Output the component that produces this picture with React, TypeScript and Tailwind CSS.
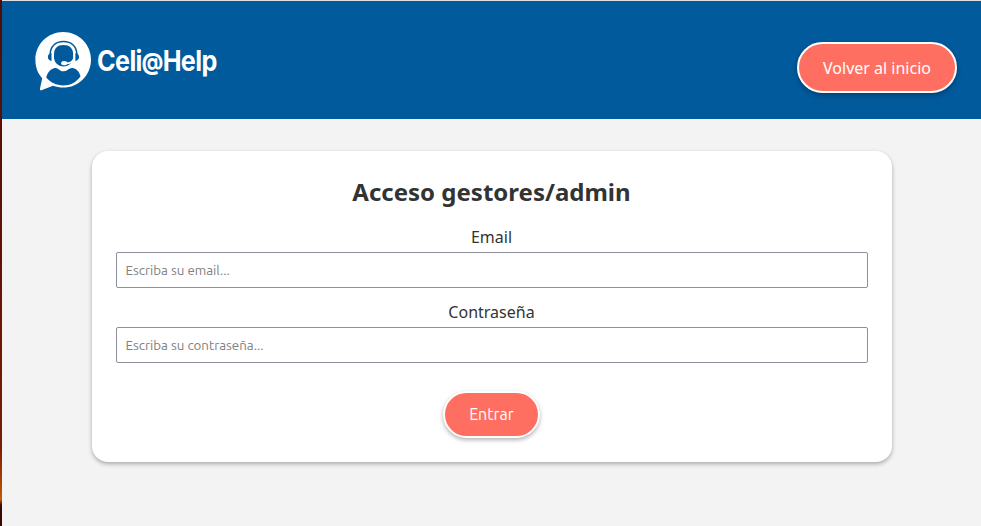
import React from "react";

function Logo() {
  return (
    <a className="mt-0.5 flex items-center" aria-label="Celi@Help">
      <svg className="h-[60px] w-[58px]" viewBox="0 0 58 60" fill="none">
        <path
          d="M28.2 1C43.5 1 56 13.2 56 28.7C56 44.2 43.5 56.6 28.2 56.6C24.6 56.6 21.2 56 18 54.8L6.4 59.2C5.4 59.6 4.8 59 4.9 58L7.2 47.2C2.7 42.3 0.4 36 0.4 28.7C0.4 13.2 12.9 1 28.2 1Z"
          fill="#fff"
        />
        <path
          d="M11.2 46.6C12.6 41.6 15.3 38 19.8 37.1C22 36.8 23.2 38.2 25.2 39.4C27.3 40.6 30.2 40.6 32.2 39.2C34.2 37.8 35.5 36.7 37.8 37.1C42 38 44.4 41.3 45.5 45.4C41.2 51.2 35.2 54.4 28.3 54.4C21.4 54.4 15.3 51.6 11.2 46.6Z"
          fill="#005a9c"
        />
        <path d="M15.2 23.5C15.2 15.4 20.6 10.6 28.5 10.6C36.4 10.6 41.8 15.4 41.8 23.5" stroke="#005a9c" strokeWidth="1.5" />
        <path
          d="M19 23.5C19 17.2 22.4 14 28.5 14C34.6 14 38.1 17.2 38.1 23.5V26C38.1 31.5 34 35.4 28.5 35.4C23 35.4 19 31.5 19 26Z"
          fill="#005a9c"
        />
        <path d="M16.5 22V29.9C14.1 29.5 12.9 28.2 12.9 26C12.9 23.8 14.2 22.3 16.5 22Z" fill="#005a9c" />
        <path d="M40.4 22V29.9C42.8 29.5 44 28.2 44 26C44 23.8 42.7 22.3 40.4 22Z" fill="#005a9c" />
        <path d="M39 27.4C38 30.8 35.4 32.3 30.5 32.4" stroke="#fff" strokeWidth="1.7" />
        <ellipse cx="29.2" cy="32.2" rx="3" ry="2.1" fill="#fff" />
      </svg>
      <span className="-mt-px ml-1 flex h-8 w-[122px] origin-left scale-x-[0.9] items-baseline whitespace-nowrap font-['Inter',sans-serif] text-[28px] font-bold leading-[32px] tracking-[-0.7px] text-white">
        <span>Celi</span>
        <span className="relative -top-px text-[23px] font-extrabold">@</span>
        <span>Help</span>
      </span>
    </a>
  );
}

function Field({ id, label, type, placeholder }: { id: string; label: string; type: string; placeholder: string }) {
  return (
    <div className="flex flex-col items-center">
      <label htmlFor={id} className="mb-0.5 mr-px flex h-[27px] items-center text-base leading-6">
        {label}
      </label>
      <input
        id={id}
        type={type}
        placeholder={placeholder}
        className="h-9 w-full rounded-[2px] border border-[#8f8f9d] bg-white px-[8.5px] font-['Ubuntu','Noto_Sans',sans-serif] text-[13.333px] placeholder:text-[#808080]"
      />
    </div>
  );
}

export default function App() {
  return (
    <div className="flex h-[526px] overflow-hidden font-['Noto_Sans',sans-serif] text-[#333333]">
      <div className="w-0.5 shrink-0 bg-[linear-gradient(to_bottom,#4d0d05_0%,#651204_50%,#7a1c04_85%,#a63e05_91%,#c45c06_95%,#3a0a04_96%,#350803_100%)]" />
      <div className="flex flex-1 flex-col border-t border-[#dfdfdf] bg-[#f3f3f3]">
        <header className="flex h-[118px] items-center justify-between bg-[#005a9c] pl-[33px] pr-6">
          <Logo />
          <button className="mt-[15px] h-[51px] w-40 rounded-full border-2 border-white bg-[#ff6f61] text-base text-white shadow-[0_2px_5px_rgba(0,0,0,0.3)]">
            Volver al inicio
          </button>
        </header>
        <main className="flex justify-center pt-8">
          <form className="ml-px flex h-[311px] w-[800px] flex-col rounded-2xl bg-white px-6 pt-[22px] shadow-[0_2px_4px_rgba(0,0,0,0.3)]">
            <h1 className="mb-[13px] mr-px text-center text-2xl font-bold leading-[37px]">Acceso gestores/admin</h1>
            <div className="flex flex-col gap-2.5">
              <Field id="email" label="Email" type="text" placeholder="Escriba su email..." />
              <Field id="password" label="Contraseña" type="password" placeholder="Escriba su contraseña..." />
            </div>
            <button
              type="button"
              className="mr-px mt-7 h-[47px] w-[97px] self-center rounded-full border-2 border-white bg-[#ff6f61] pb-0.5 font-['Ubuntu','Noto_Sans',sans-serif] text-base text-white shadow-[0_2px_4px_rgba(0,0,0,0.3)]"
            >
              Entrar
            </button>
          </form>
        </main>
      </div>
    </div>
  );
}
